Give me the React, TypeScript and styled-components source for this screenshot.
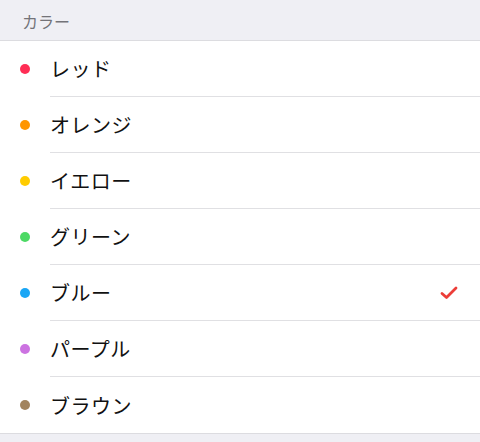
import styled, { createGlobalStyle } from "styled-components";

const GlobalStyle = createGlobalStyle`
  html, body {
    margin: 0;
    padding: 0;
    background: #efeff4;
    font-family: "Noto Sans CJK JP", "Noto Sans", sans-serif;
  }
`;

const Page = styled.div`
  width: 480px;
  height: 442px;
  background: #efeff4;
`;

const SectionHeader = styled.div`
  height: 41px;
  display: flex;
  align-items: center;
  padding-left: 22px;
  padding-top: 2px;
  box-sizing: border-box;
  font-size: 16px;
  color: #737378;
  border-bottom: 1px solid #dcdce0;
`;

const List = styled.ul`
  list-style: none;
  margin: 0;
  padding: 0;
  background: #fff;
  border-bottom: 1px solid #dcdce0;
`;

const Row = styled.li`
  height: 56px;
  display: flex;
  align-items: center;
`;

const Dot = styled.span<{ $color: string }>`
  width: 10px;
  height: 10px;
  border-radius: 50%;
  background: ${(p) => p.$color};
  margin-left: 20px;
  margin-right: 20px;
  flex-shrink: 0;
`;

const Body = styled.div<{ $last: boolean }>`
  flex: 1;
  height: 100%;
  display: flex;
  align-items: center;
  justify-content: space-between;
  padding-right: 22px;
  border-bottom: ${(p) => (p.$last ? "none" : "1px solid #e0e0e3")};
  box-sizing: border-box;
`;

const Label = styled.span`
  font-size: 20px;
  color: #111;
  letter-spacing: 0.5px;
`;

const Check = () => (
  <svg width="18" height="14" viewBox="0 0 18 14">
    <path
      d="M2 7.5 L6.5 11.5 L16 2"
      fill="none"
      stroke="#ec3d38"
      strokeWidth="2.8"
      strokeLinecap="round"
      strokeLinejoin="round"
    />
  </svg>
);

const colors = [
  { name: "レッド", color: "#ff2d55" },
  { name: "オレンジ", color: "#ff9500" },
  { name: "イエロー", color: "#ffcc00" },
  { name: "グリーン", color: "#4cd964" },
  { name: "ブルー", color: "#1aa6f5", selected: true },
  { name: "パープル", color: "#cc73e1" },
  { name: "ブラウン", color: "#a2845e" },
];

export default function App() {
  return (
    <Page>
      <GlobalStyle />
      <SectionHeader>カラー</SectionHeader>
      <List>
        {colors.map((c, i) => (
          <Row key={c.name}>
            <Dot $color={c.color} />
            <Body $last={i === colors.length - 1}>
              <Label>{c.name}</Label>
              {c.selected && <Check />}
            </Body>
          </Row>
        ))}
      </List>
    </Page>
  );
}
